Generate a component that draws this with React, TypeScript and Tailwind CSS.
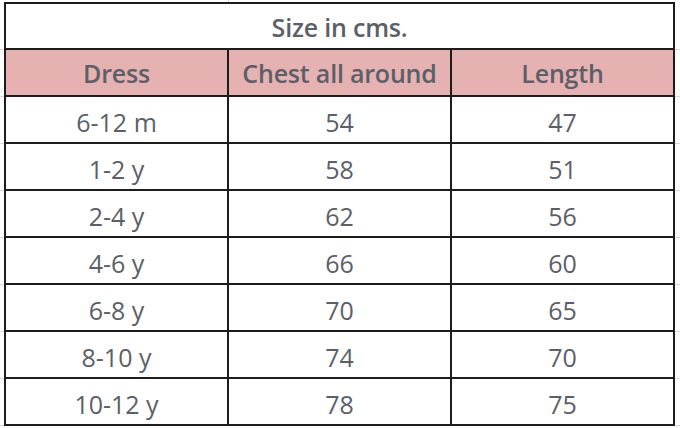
import React from "react";

const rows = [
  ["6-12 m", "54", "47"],
  ["1-2 y", "58", "51"],
  ["2-4 y", "62", "56"],
  ["4-6 y", "66", "60"],
  ["6-8 y", "70", "65"],
  ["8-10 y", "74", "70"],
  ["10-12 y", "78", "75"],
];

// faint spreadsheet gridline stubs either side of the table
const Row = ({ children, pink = false }: { children: React.ReactNode; pink?: boolean }) => (
  <div className="flex h-[47px]">
    <div className="w-[4px] border-b border-[#d9d9d9]" />
    <div
      className={`flex flex-1 border-x-2 border-b-2 border-[#1c1c1c] ${pink ? "bg-[#e6b1b1]" : "bg-white"}`}
    >
      {children}
    </div>
    <div className="w-[5px] border-b border-[#d9d9d9]" />
  </div>
);

const Cell = ({ children, w, last = false, bold = false }: { children: React.ReactNode; w: string; last?: boolean; bold?: boolean }) => (
  <div
    className={`${w} flex items-end justify-center text-[25px] leading-none ${bold ? "pb-[9px] font-semibold tracking-[-0.2px]" : "pb-[7px]"} ${
      last ? "" : "border-r-2 border-[#1c1c1c]"
    }`}
  >
    {children}
  </div>
);

export default function App() {
  return (
    <div
      className="w-[680px] h-[428px] bg-white text-[#5b6068] overflow-hidden"
      style={{ fontFamily: "'Open Sans', Lato, sans-serif" }}
    >
      <div className="flex h-[2px]">
        <div className="w-[228px]" />
        <div className="w-px bg-[#d9d9d9]" />
      </div>
      <div className="flex h-[48px]">
        <div className="w-[4px] border-b border-[#d9d9d9]" />
        <div className="flex flex-1 items-end justify-center border-2 border-[#1c1c1c] pb-[8px] text-[25px] leading-none font-semibold tracking-[-0.2px]">
          Size in cms.
        </div>
        <div className="w-[5px] border-b border-[#d9d9d9]" />
      </div>
      <Row pink>
        <Cell w="w-[223px]" bold>Dress</Cell>
        <Cell w="w-[223px]" bold>Chest all around</Cell>
        <Cell w="flex-1" bold last>Length</Cell>
      </Row>
      {rows.map((r) => (
        <Row key={r[0]}>
          <Cell w="w-[223px]">{r[0]}</Cell>
          <Cell w="w-[223px]">{r[1]}</Cell>
          <Cell w="flex-1" last>{r[2]}</Cell>
        </Row>
      ))}
    </div>
  );
}
